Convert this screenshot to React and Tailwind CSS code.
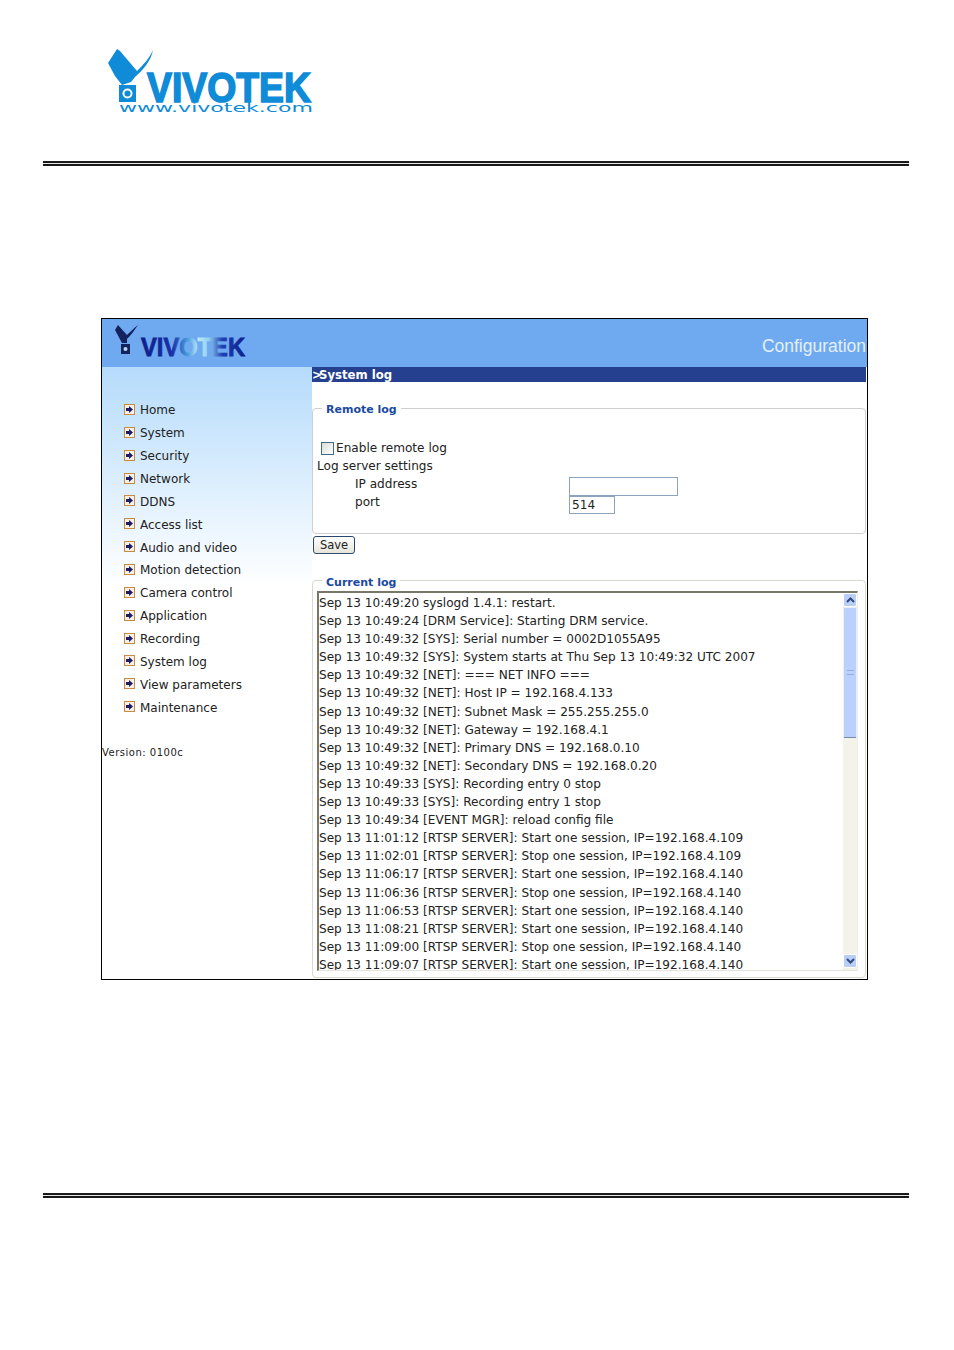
const menuItems = [
  "Home",
  "System",
  "Security",
  "Network",
  "DDNS",
  "Access list",
  "Audio and video",
  "Motion detection",
  "Camera control",
  "Application",
  "Recording",
  "System log",
  "View parameters",
  "Maintenance",
]

const logLines = [
  "Sep 13 10:49:20 syslogd 1.4.1: restart.",
  "Sep 13 10:49:24 [DRM Service]: Starting DRM service.",
  "Sep 13 10:49:32 [SYS]: Serial number = 0002D1055A95",
  "Sep 13 10:49:32 [SYS]: System starts at Thu Sep 13 10:49:32 UTC 2007",
  "Sep 13 10:49:32 [NET]: === NET INFO ===",
  "Sep 13 10:49:32 [NET]: Host IP = 192.168.4.133",
  "Sep 13 10:49:32 [NET]: Subnet Mask = 255.255.255.0",
  "Sep 13 10:49:32 [NET]: Gateway = 192.168.4.1",
  "Sep 13 10:49:32 [NET]: Primary DNS = 192.168.0.10",
  "Sep 13 10:49:32 [NET]: Secondary DNS = 192.168.0.20",
  "Sep 13 10:49:33 [SYS]: Recording entry 0 stop",
  "Sep 13 10:49:33 [SYS]: Recording entry 1 stop",
  "Sep 13 10:49:34 [EVENT MGR]: reload config file",
  "Sep 13 11:01:12 [RTSP SERVER]: Start one session, IP=192.168.4.109",
  "Sep 13 11:02:01 [RTSP SERVER]: Stop one session, IP=192.168.4.109",
  "Sep 13 11:06:17 [RTSP SERVER]: Start one session, IP=192.168.4.140",
  "Sep 13 11:06:36 [RTSP SERVER]: Stop one session, IP=192.168.4.140",
  "Sep 13 11:06:53 [RTSP SERVER]: Start one session, IP=192.168.4.140",
  "Sep 13 11:08:21 [RTSP SERVER]: Start one session, IP=192.168.4.140",
  "Sep 13 11:09:00 [RTSP SERVER]: Stop one session, IP=192.168.4.140",
  "Sep 13 11:09:07 [RTSP SERVER]: Start one session, IP=192.168.4.140",
]

const Rule = () => (
  <div className="ml-[43px] mr-[45px] h-[5px] border-y-2 border-[#1a1a1a] bg-[#e4e4e4]" />
)

const BigLogo = () => (
  <svg width="210" height="66" viewBox="0 0 210 66">
    <path d="M1 14 L10 0 L13 2 L30 22 C36 16 42 10 46 1 C44 12 36 21 28 28 L24 33 L15 36 L8 27 Z" fill="#0f8bd8" />
    <rect x="12" y="36" width="17" height="17" fill="#0f8bd8" />
    <circle cx="20.5" cy="44.5" r="5" fill="#fff" />
    <circle cx="20.5" cy="44.5" r="3" fill="#0f8bd8" />
    <text x="40" y="53" fontFamily="Liberation Sans, sans-serif" fontWeight="700" fontSize="42" fill="#0f8bd8" stroke="#0f8bd8" strokeWidth="1.6" textLength="164" lengthAdjust="spacingAndGlyphs">VIVOTEK</text>
    <text x="12" y="63" fontFamily="DejaVu Sans, sans-serif" fontSize="13" fill="#0f8bd8" textLength="194" lengthAdjust="spacingAndGlyphs">www.vivotek.com</text>
  </svg>
)

const SmallLogo = () => (
  <svg width="134" height="36" viewBox="0 0 134 36">
    <path d="M1 5 L4 0 L13 10 C16 7 19 4 24 0 C20 6 16 11 13 14 L13 18 L8 18 Z" fill="#14225e" />
    <rect x="7" y="19" width="9" height="10" fill="#14225e" />
    <circle cx="11.5" cy="24" r="2" fill="#b9d4f4" />
    <defs>
      <linearGradient id="logoFill" x1="0" x2="1" y1="0" y2="0">
        <stop offset="0" stopColor="#0c1f8a" />
        <stop offset="0.3" stopColor="#1a2fa8" />
        <stop offset="0.45" stopColor="#4aa0e0" />
        <stop offset="0.55" stopColor="#bfe8f6" />
        <stop offset="0.65" stopColor="#8fd0f0" />
        <stop offset="0.78" stopColor="#2040b0" />
        <stop offset="1" stopColor="#0c1f8a" />
      </linearGradient>
    </defs>
    <text x="27" y="31" fontFamily="Liberation Sans, sans-serif" fontWeight="700" fontSize="26" fill="url(#logoFill)" stroke="url(#logoFill)" strokeWidth="0.8" textLength="104" lengthAdjust="spacingAndGlyphs">VIVOTEK</text>
  </svg>
)

const MenuIcon = () => (
  <svg width="11" height="11" viewBox="0 0 11 11" className="shrink-0 -mt-[2px]">
    <rect x="0.5" y="0.5" width="10" height="10" fill="#f6f1e4" stroke="#c98a45" />
    <path d="M2 4 H5 V2 L9 5.5 L5 9 V7 H2 Z" fill="#1d1a66" />
  </svg>
)

const Chevron = ({ up }) => (
  <svg width="9" height="6" viewBox="0 0 9 6">
    <path d={up ? "M1 5 L4.5 1.5 L8 5" : "M1 1 L4.5 4.5 L8 1"} fill="none" stroke="#2f4a80" strokeWidth="2" />
  </svg>
)

const App = () => {
  return (
    <div className="w-[954px] h-[1350px] bg-white overflow-hidden font-['DejaVu_Sans',sans-serif] text-[12.1px] text-[#222]">
      <div className="h-[161px] pt-[49px] pl-[107px]">
        <BigLogo />
      </div>
      <Rule />

      <div className="mt-[152px] ml-[101px] w-[767px] h-[662px] border border-black flex flex-col">
        <div className="h-[48px] shrink-0 bg-[#6fa9f0] flex justify-between pl-[12px] pr-px pt-[6px]">
          <SmallLogo />
          <span className="mt-[11px] font-['Liberation_Sans',sans-serif] text-[17.5px] leading-[20px] text-[#e3effb]">Configuration</span>
        </div>

        <div className="flex flex-1 min-h-0">
          <aside className="w-[210px] shrink-0 bg-gradient-to-b from-[#b5dbfb] to-white to-[36%] pt-[32px]">
            <ul className="pl-[22px] text-[12px]">
              {menuItems.map((item) => (
                <li key={item} className="h-[22.87px] flex items-center gap-[5px]">
                  <MenuIcon />
                  <span>{item}</span>
                </li>
              ))}
            </ul>
            <p className="mt-[27px] leading-[14px] text-[10px] tracking-[0.5px]">Version: 0100c</p>
          </aside>

          <main className="flex-1 min-w-0 pr-px">
            <div className="h-[15px] bg-[#24408f] font-bold text-[11.7px] leading-[16px] text-white flex">
              <span className="w-[7px]">&gt;</span>
              <span>System log</span>
            </div>

            <fieldset className="mt-[18px] h-[134px] min-w-0 border border-[#cfcfcf] rounded-[4px] px-[4px]">
              <legend className="ml-[5px] px-[4px] font-bold text-[11px] leading-[16px] text-[#1b4aa0] relative top-[2px]">Remote log</legend>
              <label className="mt-[23px] ml-[4px] flex items-center h-[18px]">
                <span className="w-[13px] h-[13px] border border-[#3f6b8a] bg-gradient-to-br from-[#dcdcd4] to-white mr-[2px]" />
                Enable remote log
              </label>
              <div className="leading-[18px]">Log server settings</div>
              <div className="grid grid-cols-[214px_auto] pl-[38px] mt-[2px]">
                <div className="h-[19px] leading-[15px]">IP address</div>
                <div className="w-[109px] h-[19px] border border-[#8ba3bb]" />
                <div className="leading-[13px]">port</div>
                <div className="w-[46px] h-[18px] border border-[#8ba3bb] pl-[2px] leading-[17px]">514</div>
              </div>
            </fieldset>

            <button className="block mt-[2px] ml-px w-[42px] h-[18px] rounded-[3px] border border-[#2b4a6b] bg-gradient-to-b from-white to-[#e6e4da] text-[11.5px] leading-[14px]">Save</button>

            <fieldset className="mt-[20px] h-[404px] min-w-0 border border-[#d8d8cc] rounded-[4px] pl-[4px] pr-[7px]">
              <legend className="ml-[5px] px-[4px] font-bold text-[11px] leading-[13px] text-[#1b4aa0] relative top-[2px]">Current log</legend>
              <div className="mt-[4px] h-[380px] border-t-2 border-l-2 border-[#77776c] border-r border-r-[#eee] border-b border-b-[#e4e4dc] flex overflow-hidden">
                <div className="flex-1 min-w-0 pt-px overflow-hidden">
                  {logLines.map((line) => (
                    <div key={line} className="h-[18.1px] leading-[18px] whitespace-nowrap">{line}</div>
                  ))}
                </div>
                <div className="w-[14px] shrink-0 flex flex-col bg-[#f3f3ea] pb-[2px]">
                  <div className="h-[14px] shrink-0 rounded-[2px] bg-[#b9cdf5] border border-white flex items-center justify-center"><Chevron up /></div>
                  <div className="h-[131px] shrink-0 rounded-[2px] bg-[#bbd0fa] border border-[#e6eeff] border-b-[#6f88b8] flex items-center justify-center">
                    <div className="w-[7px] h-[5px] border-y border-[#93aee0]" />
                  </div>
                  <div className="flex-1" />
                  <div className="h-[14px] shrink-0 rounded-[2px] bg-[#b9cdf5] border border-white flex items-center justify-center"><Chevron /></div>
                </div>
              </div>
            </fieldset>
          </main>
        </div>
      </div>

      <div className="mt-[213px]">
        <Rule />
      </div>
    </div>
  )
}

export default App
